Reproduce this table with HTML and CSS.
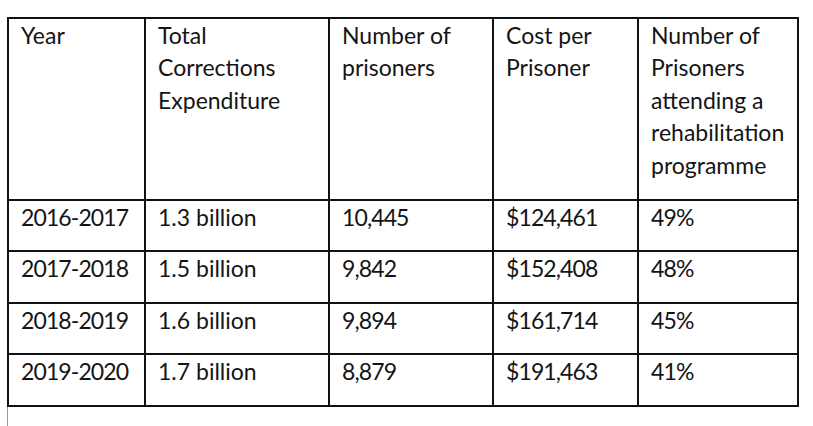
FILE: index.html
```html
<!DOCTYPE html>
<html>
<head>
<meta charset="utf-8">
<link rel="stylesheet" href="styles.css">
</head>
<body>
<table class="data">
  <colgroup>
    <col class="c1"><col class="c2"><col class="c3"><col class="c4"><col class="c5">
  </colgroup>
  <tr class="head">
    <td>Year</td>
    <td>Total<br>Corrections<br>Expenditure</td>
    <td>Number of<br>prisoners</td>
    <td>Cost per<br>Prisoner</td>
    <td>Number of<br>Prisoners<br>attending a<br>rehabilitation<br>programme</td>
  </tr>
  <tr>
    <td class="num">2016-2017</td><td>1.3 billion</td><td class="num">10,445</td><td class="num">$124,461</td><td class="num">49%</td>
  </tr>
  <tr>
    <td class="num">2017-2018</td><td>1.5 billion</td><td class="num">9,842</td><td class="num">$152,408</td><td class="num">48%</td>
  </tr>
  <tr>
    <td class="num">2018-2019</td><td>1.6 billion</td><td class="num">9,894</td><td class="num">$161,714</td><td class="num">45%</td>
  </tr>
  <tr>
    <td class="num">2019-2020</td><td>1.7 billion</td><td class="num">8,879</td><td class="num">$191,463</td><td class="num">41%</td>
  </tr>
</table>
<div class="cursor"></div>
</body>
</html>
```

FILE: styles.css
```css
html, body {
  margin: 0;
  padding: 0;
  background: #fff;
}
body {
  padding: 17px 0 0 7px;
  font-family: Lato, "Open Sans", sans-serif;
  color: #141414;
}
.data {
  border-collapse: collapse;
  table-layout: fixed;
  width: 790px;
}
.c1 { width: 137px; }
.c2 { width: 184px; }
.c3 { width: 164px; }
.c4 { width: 145px; }
.c5 { width: 160px; }
.data td {
  border: 2px solid #111;
  vertical-align: top;
  font-size: 23px;
  line-height: 32.4px;
  padding: 0 12px 17px 12px;
  white-space: nowrap;
}
.data .head td {
  padding-bottom: 18px;
}
.data td.num {
  letter-spacing: -0.9px;
}
.cursor {
  width: 0;
  height: 22px;
  border-left: 1px solid #9a9a9a;
}
```
